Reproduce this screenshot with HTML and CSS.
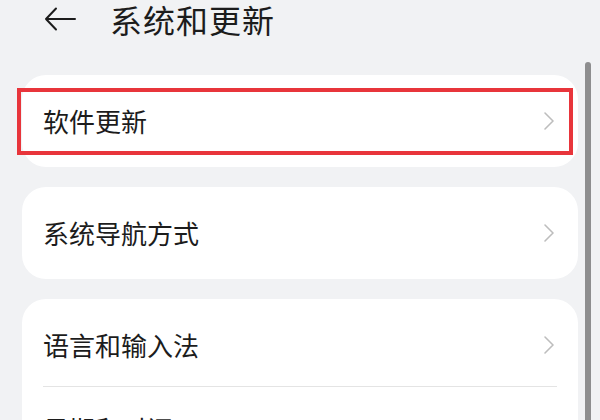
FILE: index.html
```html
<!DOCTYPE html>
<html lang="zh-CN">
<head>
  <meta charset="UTF-8">
  <meta name="viewport" content="width=device-width, initial-scale=1.0">
  <title>系统和更新</title>
  <link rel="stylesheet" href="styles.css">
</head>
<body>
  <div class="screen">
    <header class="header">
      <svg class="back" viewBox="0 0 32 24" width="32" height="24">
        <path d="M31 12H2M12 1.5L2 12l10 10.5" fill="none" stroke="#1c1c1c" stroke-width="2" stroke-linecap="round" stroke-linejoin="round"/>
      </svg>
      <h1>系统和更新</h1>
    </header>

    <main class="content">
      <section class="card">
        <div class="row">
          <span class="label">软件更新</span>
          <svg class="chevron" viewBox="0 0 12 20" width="12" height="20"><path d="M2 2l8 8-8 8" fill="none" stroke="#bdbdbd" stroke-width="1.6" stroke-linecap="round" stroke-linejoin="round"/></svg>
        </div>
        <div class="highlight"></div>
      </section>

      <section class="card">
        <div class="row">
          <span class="label">系统导航方式</span>
          <svg class="chevron" viewBox="0 0 12 20" width="12" height="20"><path d="M2 2l8 8-8 8" fill="none" stroke="#bdbdbd" stroke-width="1.6" stroke-linecap="round" stroke-linejoin="round"/></svg>
        </div>
      </section>

      <section class="card">
        <div class="row divided">
          <span class="label">语言和输入法</span>
          <svg class="chevron" viewBox="0 0 12 20" width="12" height="20"><path d="M2 2l8 8-8 8" fill="none" stroke="#bdbdbd" stroke-width="1.6" stroke-linecap="round" stroke-linejoin="round"/></svg>
        </div>
        <div class="row">
          <span class="label">日期和时间</span>
          <svg class="chevron" viewBox="0 0 12 20" width="12" height="20"><path d="M2 2l8 8-8 8" fill="none" stroke="#bdbdbd" stroke-width="1.6" stroke-linecap="round" stroke-linejoin="round"/></svg>
        </div>
      </section>
    </main>

    <div class="scrollbar"></div>
  </div>
</body>
</html>
```

FILE: styles.css
```css
/* Basic styles */
body {
  margin: 0;
  padding: 0;
  font-family: "Noto Sans CJK SC", "Noto Sans", sans-serif;
  background-color: #f1f2f4;
  color: #1c1c1c;
  overflow: hidden;
}
.screen {
  position: relative;
  width: 600px;
  height: 420px;
  overflow: hidden;
}
.header {
  display: flex;
  align-items: center;
  height: 38px;
  padding: 0 0 0 44px;
  margin-bottom: 37px;
}
.back {
  display: block;
  margin-right: 34px;
}
.header h1 {
  margin: 0;
  font-size: 32px;
  font-weight: 400;
  line-height: 38px;
  letter-spacing: 1px;
}
.content {
  padding: 0 22px;
  display: flex;
  flex-direction: column;
  gap: 20px;
}
.card {
  position: relative;
  background: #ffffff;
  border-radius: 24px;
  padding: 4px 0;
}
.row {
  display: flex;
  align-items: center;
  justify-content: space-between;
  height: 84px;
  margin: 0 21px;
  padding-right: 2px;
}
.row.divided {
  border-bottom: 1px solid #e4e4e4;
  height: 83px;
}
.label {
  font-size: 26px;
  line-height: 30px;
}
.chevron {
  display: block;
}
/* red annotation frame drawn over the first row */
.highlight {
  position: absolute;
  left: -5px;
  right: 5px;
  top: 13px;
  bottom: 12px;
  border: 4px solid #e8353b;
}
.scrollbar {
  position: absolute;
  left: 585px;
  top: 62px;
  width: 6px;
  height: 380px;
  background: #8e8e8f;
  border-radius: 3px;
}
```
